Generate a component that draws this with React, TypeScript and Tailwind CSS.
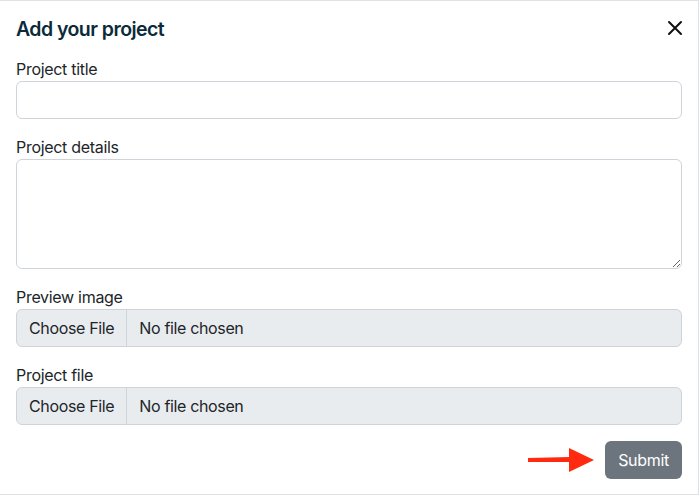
import React from "react";

const font = { fontFamily: "Inter, 'Noto Sans', sans-serif" };

function FileRow() {
  return (
    <div className="flex h-[38px] w-full rounded-[6px] border border-[#ced4da] bg-[#e9ecef] text-[16px] tracking-[-0.35px] text-[#212529]">
      <div className="flex items-center border-r border-[#ced4da] px-[12px]">Choose File</div>
      <div className="flex items-center px-[12px]">No file chosen</div>
    </div>
  );
}

export default function App() {
  return (
    <div
      className="relative h-[495px] w-[699px] border-b border-r border-t border-[#dee2e6] bg-white"
      style={font}
    >
      <div className="flex items-center justify-between pl-[16px] pr-[15px] pt-[13px]">
        <h1 className="text-[19.5px] font-semibold leading-[30px] tracking-[-0.55px] text-[#0b2a3a]">Add your project</h1>
        <svg width="16" height="16" viewBox="0 0 16 16" className="mb-[2px]">
          <path d="M2 2 L14 14 M14 2 L2 14" stroke="#111" strokeWidth="2" strokeLinecap="round" />
        </svg>
      </div>
      <div className="flex flex-col px-[16px] pt-[13px] text-[16px] tracking-[-0.3px] text-[#212529]">
        <label className="leading-[24px]">Project title</label>
        <input className="h-[38px] w-full rounded-[6px] border border-[#ced4da] bg-white" />
        <label className="mt-[16px] leading-[24px]">Project details</label>
        <textarea className="block h-[110px] w-full resize-y rounded-[6px] border border-[#ced4da] bg-white" />
        <label className="mt-[16px] leading-[24px]">Preview image</label>
        <FileRow />
        <label className="mt-[16px] leading-[24px]">Project file</label>
        <FileRow />
        <div className="mt-[16px] flex items-center justify-end gap-[9px]">
          <svg width="70" height="26" viewBox="0 0 70 26">
            <polygon points="2,11 44,10 44,15 2,15" fill="#ff2a10" />
            <polygon points="43,1 68,13 43,25" fill="#ff2a10" />
          </svg>
          <button className="h-[38px] rounded-[6px] bg-[#6c757d] px-[13px] text-[16px] tracking-[-0.3px] text-white">Submit</button>
        </div>
      </div>
    </div>
  );
}
